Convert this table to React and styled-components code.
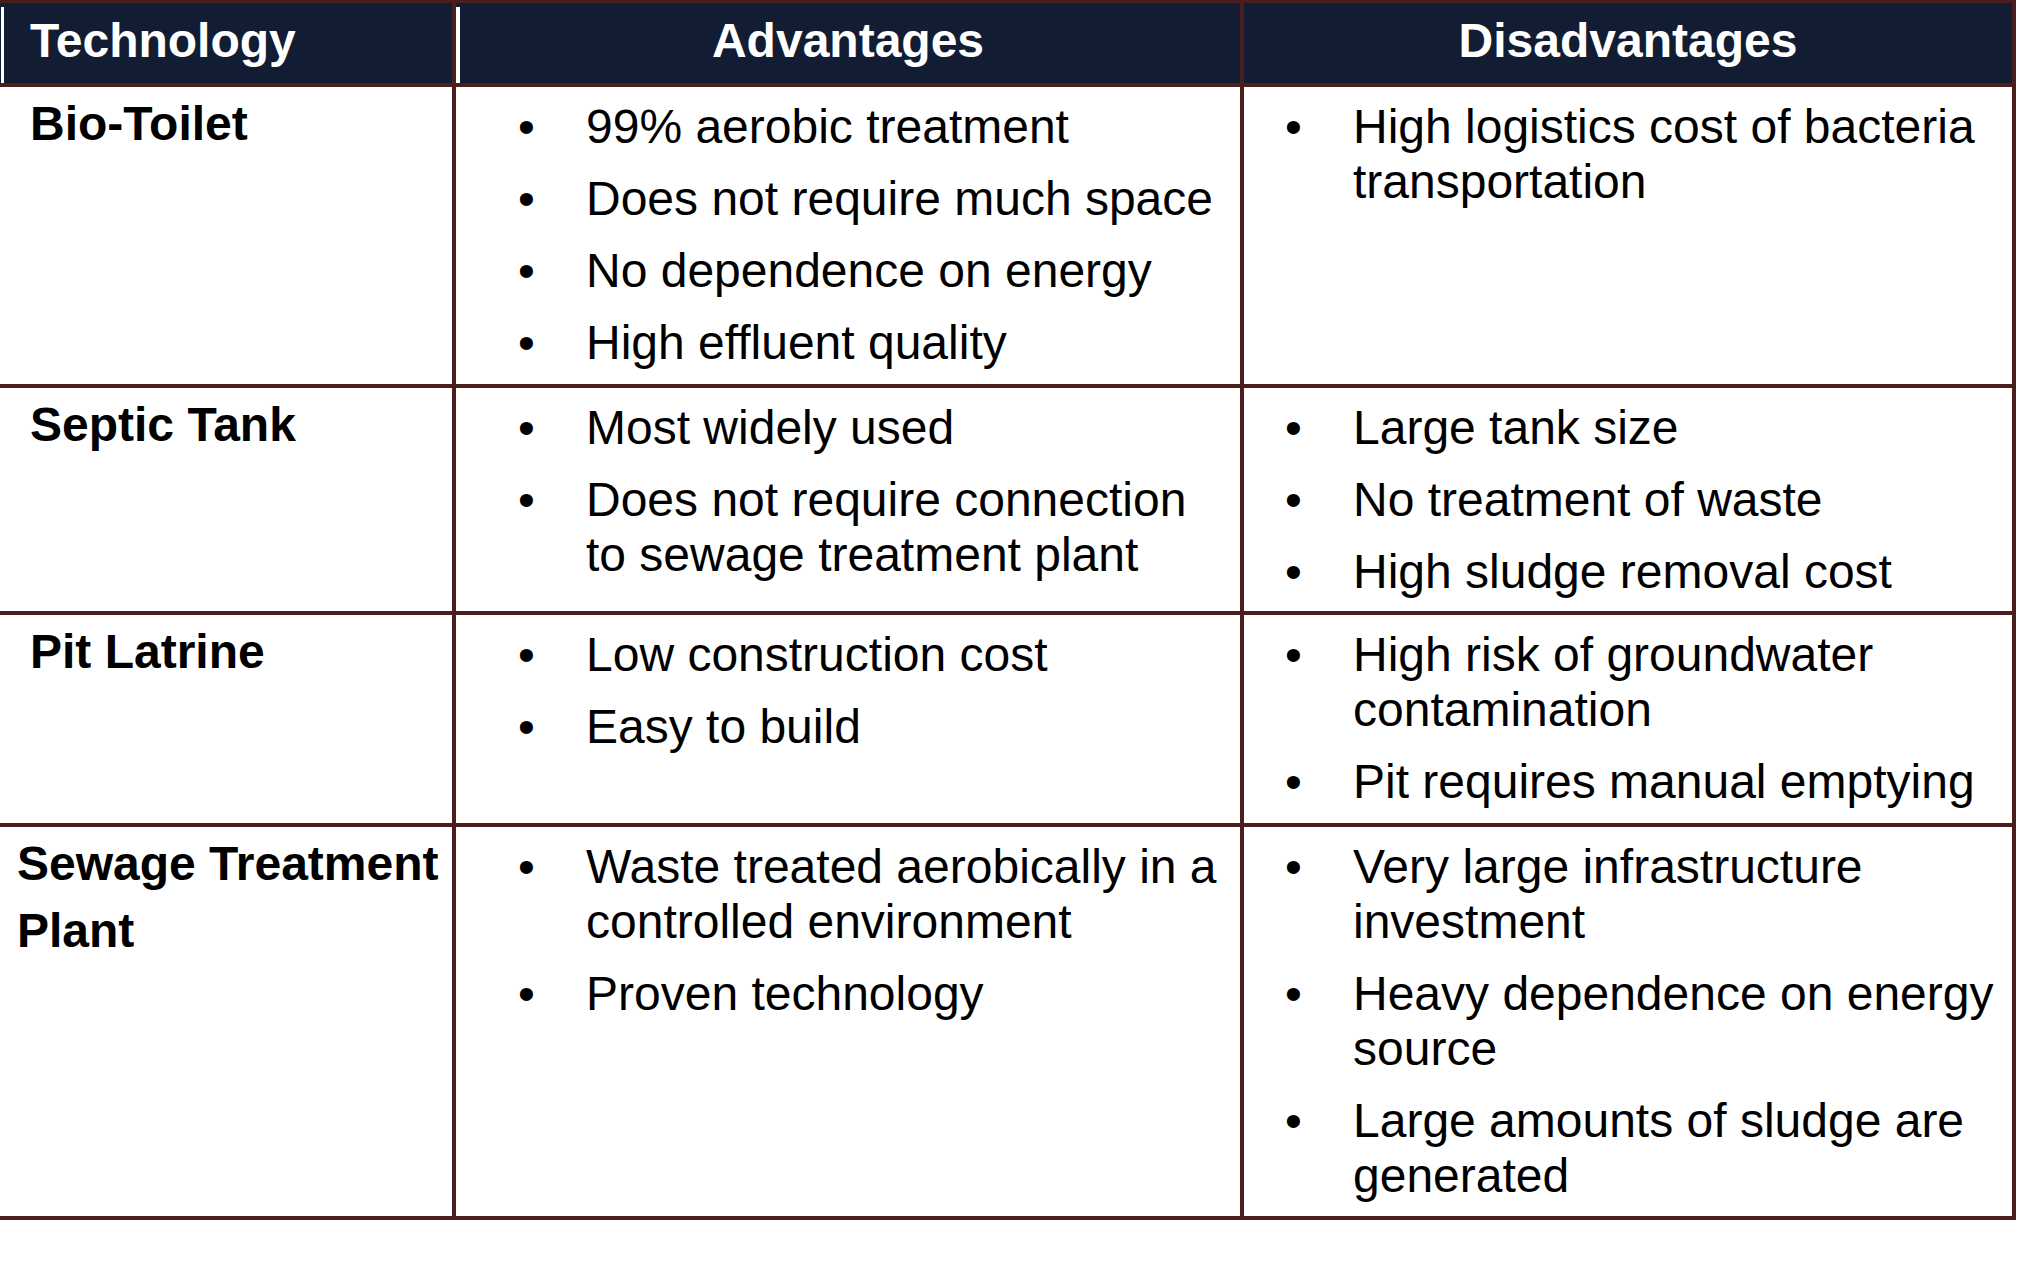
import styled, { createGlobalStyle } from 'styled-components';

const GlobalStyle = createGlobalStyle`
  html, body {
    margin: 0;
    padding: 0;
    background: #ffffff;
  }
  body {
    font-family: 'Liberation Sans', Arial, sans-serif;
  }
`;

const NAVY = '#121c32';
const MAROON = '#4b1e1e';

// the table: maroon background shows through the gaps as the grid lines
const Table = styled.div`
  display: grid;
  grid-template-columns: 452px 784px 768px;
  grid-template-rows: 80px 297px 223px 208px 389px;
  gap: 4px;
  width: fit-content;
  padding: 3px 4px 4px 0;
  background: ${MAROON};
  font-family: 'Liberation Sans', Arial, sans-serif;
  font-size: 48px;
  color: #000;
`;

const HeadCell = styled.div`
  padding: 10px 0 0 ${(p) => (p.$center ? 0 : 30)}px;
  text-align: ${(p) => (p.$center ? 'center' : 'left')};
  line-height: 55px;
  font-weight: 700;
  color: #ffffff;
  background: ${(p) =>
    p.$strip !== undefined
      ? `linear-gradient(#fff, #fff) left ${p.$strip}px top 4px / ${4 - p.$strip}px calc(100% - 4px) no-repeat, ${NAVY}`
      : NAVY};
`;

const TechCell = styled.div`
  background: #ffffff;
  padding: 3px 0 0 ${(p) => p.$indent}px;
  font-weight: 700;
  line-height: 67px;
`;

const ListCell = styled.div`
  background: #ffffff;
  padding: 12px ${(p) => p.$right}px 0 ${(p) => p.$left}px;
`;

const BulletList = styled.ul`
  list-style: none;
  margin: 0;
  padding: 0;
  display: flex;
  flex-direction: column;
  gap: 17px;
`;

const Item = styled.li`
  display: grid;
  grid-template-columns: 68px 1fr;
  line-height: 55px;
`;

const Dot = styled.span`
  display: block;
`;

const rows = [
  {
    tech: ['Bio-Toilet'],
    indent: 30,
    pros: [
      '99% aerobic treatment',
      'Does not require much space',
      'No dependence on energy',
      'High effluent quality',
    ],
    cons: ['High logistics cost of bacteria transportation'],
  },
  {
    tech: ['Septic Tank'],
    indent: 30,
    pros: [
      'Most widely used',
      'Does not require connection to sewage treatment plant',
    ],
    cons: ['Large tank size', 'No treatment of waste', 'High sludge removal cost'],
  },
  {
    tech: ['Pit Latrine'],
    indent: 30,
    pros: ['Low construction cost', 'Easy to build'],
    cons: [
      'High risk of groundwater contamination',
      'Pit requires manual emptying',
    ],
  },
  {
    tech: ['Sewage Treatment', 'Plant'],
    indent: 17,
    pros: [
      'Waste treated aerobically in a controlled environment',
      'Proven technology',
    ],
    cons: [
      'Very large infrastructure investment',
      'Heavy dependence on energy source',
      'Large amounts of sludge are generated',
    ],
  },
];

const Bullets = ({ items }) => (
  <BulletList>
    {items.map((text) => (
      <Item key={text}>
        <Dot>•</Dot>
        <span>{text}</span>
      </Item>
    ))}
  </BulletList>
);

const App = () => {
  return (
    <>
      <GlobalStyle />
      <Table>
        <HeadCell $strip={1}>Technology</HeadCell>
        <HeadCell $center $strip={0}>
          Advantages
        </HeadCell>
        <HeadCell $center>Disadvantages</HeadCell>

        {rows.map((row) => [
          <TechCell key={row.tech[0] + '-t'} $indent={row.indent}>
            {row.tech.map((line) => (
              <div key={line}>{line}</div>
            ))}
          </TechCell>,
          <ListCell key={row.tech[0] + '-p'} $left={62} $right={9}>
            <Bullets items={row.pros} />
          </ListCell>,
          <ListCell key={row.tech[0] + '-c'} $left={41} $right={7}>
            <Bullets items={row.cons} />
          </ListCell>,
        ])}
      </Table>
    </>
  );
};

export default App;
